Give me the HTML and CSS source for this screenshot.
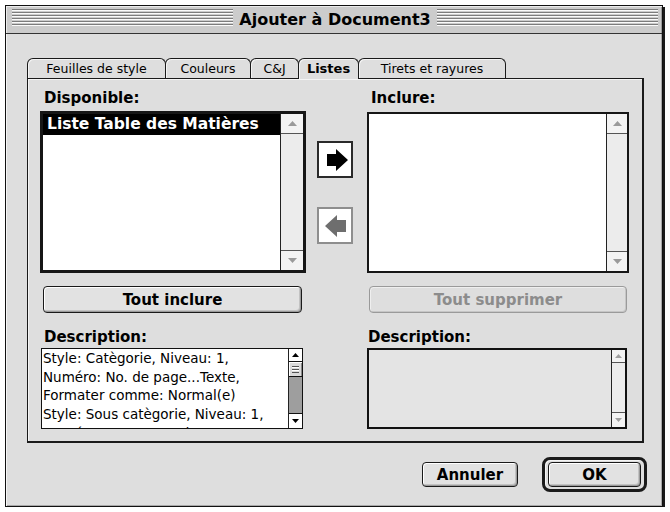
FILE: index.html
```html
<!DOCTYPE html>
<html lang="fr">
<head>
<meta charset="utf-8">
<title>Ajouter à Document3</title>
<link rel="stylesheet" href="styles.css">
</head>
<body>
<div class="window">
  <div class="titlebar">
    <div class="stripes"></div>
    <div class="title">Ajouter à Document3</div>
    <div class="stripes"></div>
  </div>
  <div class="content">
    <div class="tabs">
      <div class="tab tab-feuilles">Feuilles de style</div>
      <div class="tab tab-couleurs">Couleurs</div>
      <div class="tab tab-cj">C&amp;J</div>
      <div class="tab tab-listes is-active">Listes</div>
      <div class="tab tab-tirets">Tirets et rayures</div>
    </div>
    <div class="panel">
      <div class="col col-left">
        <div class="label">Disponible:</div>
        <div class="listbox listbox-focus">
          <div class="list-items">
            <div class="list-item is-selected">Liste Table des Matières</div>
          </div>
          <div class="vscroll">
            <div class="sb-btn sb-up"><svg width="9" height="5" viewBox="0 0 9 5"><polygon points="0,5 4.5,0 9,5" fill="#9a9a9a"/></svg></div>
            <div class="sb-track"></div>
            <div class="sb-btn sb-down"><svg width="9" height="5" viewBox="0 0 9 5"><polygon points="0,0 4.5,5 9,0" fill="#9a9a9a"/></svg></div>
          </div>
        </div>
        <div class="btn btn-panel">Tout inclure</div>
        <div class="label label-desc">Description:</div>
        <div class="descbox">
          <div class="desc-text">
            <div>Style: Catègorie, Niveau: 1,</div>
            <div>Numéro: No. de page...Texte,</div>
            <div>Formater comme: Normal(e)</div>
            <div>Style: Sous catègorie, Niveau: 1,</div>
            <div>Numéro: Texte...No. de page,</div>
          </div>
          <div class="vscroll vscroll-small vscroll-active">
            <div class="sb-btn sb-up"><svg width="7" height="4" viewBox="0 0 7 4"><polygon points="0,4 3.5,0 7,4" fill="#000"/></svg></div>
            <div class="sb-thumb"><div class="grip"></div></div>
            <div class="sb-track"></div>
            <div class="sb-btn sb-down sb-down-small"><svg width="7" height="4" viewBox="0 0 7 4"><polygon points="0,0 3.5,4 7,0" fill="#000"/></svg></div>
          </div>
        </div>
      </div>
      <div class="arrows">
        <div class="arrow-btn arrow-add"><svg width="21" height="22" viewBox="0 0 21 22"><polygon points="0,5 9,5 9,0 21,11 9,22 9,17 0,17" fill="#000"/></svg></div>
        <div class="arrow-btn arrow-remove"><svg width="21" height="22" viewBox="0 0 21 22"><polygon points="21,5 12,5 12,0 0,11 12,22 12,17 21,17" fill="#6e6e6e"/></svg></div>
      </div>
      <div class="col col-right">
        <div class="label">Inclure:</div>
        <div class="listbox listbox-plain">
          <div class="list-items"></div>
          <div class="vscroll vscroll-narrow">
            <div class="sb-btn sb-up"><svg width="9" height="5" viewBox="0 0 9 5"><polygon points="0,5 4.5,0 9,5" fill="#9a9a9a"/></svg></div>
            <div class="sb-track"></div>
            <div class="sb-btn sb-down"><svg width="9" height="5" viewBox="0 0 9 5"><polygon points="0,0 4.5,5 9,0" fill="#9a9a9a"/></svg></div>
          </div>
        </div>
        <div class="btn btn-panel btn-disabled">Tout supprimer</div>
        <div class="label label-desc label-desc-right">Description:</div>
        <div class="descbox descbox-empty">
          <div class="desc-text"></div>
          <div class="vscroll vscroll-small">
            <div class="sb-btn sb-up"><svg width="7" height="4" viewBox="0 0 7 4"><polygon points="0,4 3.5,0 7,4" fill="#a0a0a0"/></svg></div>
            <div class="sb-track"></div>
            <div class="sb-btn sb-down sb-down-small"><svg width="7" height="4" viewBox="0 0 7 4"><polygon points="0,0 3.5,4 7,0" fill="#a0a0a0"/></svg></div>
          </div>
        </div>
      </div>
    </div>
    <div class="actions">
      <div class="btn btn-cancel">Annuler</div>
      <div class="default-ring"><div class="btn btn-ok">OK</div></div>
    </div>
  </div>
</div>
</body>
</html>
```
FILE: styles.css
```css
* { box-sizing: border-box; }
html, body { margin: 0; padding: 0; background: #ffffff; }
body {
  font-family: "DejaVu Sans", "Noto Sans", sans-serif;
  color: #000;
}

.window {
  margin: 5px 0 0 5px;
  width: 658px;
  height: 502px;
  border: 1px solid #111;
  background: #dedede;
  box-shadow: 2px 2px 0 #1a1a1a, inset 1px 1px 0 #f6f6f6, inset -1px -1px 0 #a8a8a8;
  display: flex;
  flex-direction: column;
}

.titlebar {
  flex: none;
  height: 28px;
  border-bottom: 1px solid #333;
  background: #cccccc;
  box-shadow: inset 1px 1px 0 #ececec, inset -1px 0 0 #9c9c9c;
  display: flex;
  align-items: flex-start;
  gap: 6px;
  padding: 0 4px 0 6px;
}
.stripes {
  flex: 1;
  height: 18px;
  margin-top: 3px;
  background: repeating-linear-gradient(to bottom, #7c7c7c 0 1px, #fafafa 1px 2px, #cccccc 2px 3px);
}
.title {
  flex: none;
  font-weight: bold;
  font-size: 16px;
  line-height: 27px;
  white-space: nowrap;
}

.content {
  flex: 1;
  padding: 24px 15px 0 21px;
  display: flex;
  flex-direction: column;
}

.tabs {
  display: flex;
  align-items: flex-start;
  height: 21px;
  margin-bottom: -1px;
  position: relative;
  z-index: 1;
}
.tab {
  height: 20px;
  margin-left: -1px;
  border: 1px solid #1a1a1a;
  border-bottom: none;
  border-radius: 6px 6px 0 0;
  background: #dedede;
  box-shadow: inset 1px 1px 0 #f4f4f4;
  font-size: 12.5px;
  line-height: 20px;
  text-align: center;
  white-space: nowrap;
}
.tab:first-child { margin-left: 0; }
.tab-feuilles { width: 139px; }
.tab-couleurs { width: 86px; }
.tab-cj { width: 49px; }
.tab-listes { width: 61px; }
.tab-tirets { width: 148px; }
.tab.is-active {
  height: 21px;
  font-weight: bold;
  font-size: 13px;
}

.panel {
  width: 617px;
  height: 365px;
  border: 1px solid #1a1a1a;
  border-right-width: 2px;
  border-bottom-width: 2px;
  background: #dedede;
  box-shadow: inset 1px 1px 0 #f4f4f4;
  padding: 10px 13px 12px 12px;
  display: flex;
}

.col {
  display: flex;
  flex-direction: column;
}
.col-left { width: 266px; }
.col-right { width: 262px; }

.label {
  height: 18px;
  line-height: 18px;
  padding-left: 4px;
  font-weight: bold;
  font-size: 15px;
  white-space: nowrap;
}
.label-desc { margin-top: 15px; }
.label-desc-right { padding-left: 1px; }

.listbox {
  display: flex;
  background: #fff;
}
.listbox-focus {
  margin-top: 4px;
  height: 162px;
  border: 3px solid #161616;
}
.listbox-plain {
  margin-top: 5px;
  height: 161px;
  border: 2px solid #161616;
}
.list-items {
  flex: 1;
  overflow: hidden;
}
.list-item {
  height: 21px;
  line-height: 21px;
  padding-left: 4px;
  font-weight: bold;
  font-size: 15.5px;
  white-space: nowrap;
}
.list-item.is-selected {
  background: #000;
  color: #fff;
}

.vscroll {
  flex: none;
  width: 23px;
  border-left: 1px solid #222;
  background: #ececec;
  display: flex;
  flex-direction: column;
}
.vscroll-narrow { width: 21px; }
.sb-btn {
  flex: none;
  height: 20px;
  display: flex;
  align-items: center;
  justify-content: center;
  background: #f3f3f3;
}
.sb-btn svg { display: block; }
.sb-up { border-bottom: 1px solid #555; }
.sb-down { border-top: 1px solid #555; }
.sb-track { flex: 1; }

.vscroll-small { width: 14px; }
.vscroll-small .sb-up { height: 13px; }
.vscroll-small .sb-down-small { height: 15px; }
.vscroll-active .sb-btn { background: #ffffff; border-color: #111; }
.vscroll-active .sb-track { background: #9e9e9e; }
.sb-thumb {
  flex: none;
  height: 15px;
  background: #dadada;
  border-bottom: 1px solid #111;
  box-shadow: inset 1px 1px 0 #fff, inset -1px 0 0 #888;
  display: flex;
  align-items: center;
  justify-content: center;
}
.grip {
  width: 7px;
  height: 7px;
  background: repeating-linear-gradient(to bottom, #555 0 1px, #ffffff 1px 2px, #dadada 2px 3px);
}

.btn {
  display: flex;
  align-items: center;
  justify-content: center;
  border: 1px solid #1a1a1a;
  border-radius: 4px;
  background: #e2e2e2;
  box-shadow: inset 1px 1px 0 #ffffff, inset -1px -1px 0 #9a9a9a, inset -2px -2px 0 #c2c2c2;
  font-weight: bold;
  font-size: 15px;
  white-space: nowrap;
}
.btn-panel {
  margin: 13px 4px 0 3px;
  height: 27px;
}
.btn-disabled {
  margin: 13px 2px 0 2px;
  border-color: #9a9a9a;
  color: #8c8c8c;
  background: #dedede;
  box-shadow: inset 1px 1px 0 #efefef, inset -1px -1px 0 #c6c6c6;
}

.descbox {
  margin: 2px 3px 0 1px;
  height: 81px;
  border: 1px solid #111;
  background: #fff;
  display: flex;
}
.descbox-empty {
  margin: 2px 2px 0 0;
  border-width: 2px;
  background: #e4e4e4;
}
.desc-text {
  flex: 1;
  overflow: hidden;
  padding-left: 1px;
  font-size: 13.5px;
  line-height: 18.7px;
  white-space: nowrap;
}

.arrows {
  flex: none;
  width: 36px;
  margin: 0 14px 0 11px;
  display: flex;
  flex-direction: column;
}
.arrow-btn {
  height: 37px;
  border: 2px solid #2a2a2a;
  background: #fff;
  display: flex;
  align-items: center;
  justify-content: center;
}
.arrow-btn svg { display: block; }
.arrow-add {
  margin-top: 52px;
  padding-left: 4px;
}
.arrow-remove {
  margin-top: 29px;
  border-color: #8e8e8e;
}

.actions {
  display: flex;
  justify-content: flex-end;
  align-items: center;
  gap: 24px;
  margin-top: 14px;
}
.btn-cancel {
  width: 96px;
  height: 25px;
}
.default-ring {
  border: 3px solid #1a1a1a;
  border-radius: 8px;
  padding: 2px 3px;
  background: #dedede;
  box-shadow: inset 1px 1px 0 #f4f4f4;
}
.btn-ok {
  width: 93px;
  height: 25px;
}
```
